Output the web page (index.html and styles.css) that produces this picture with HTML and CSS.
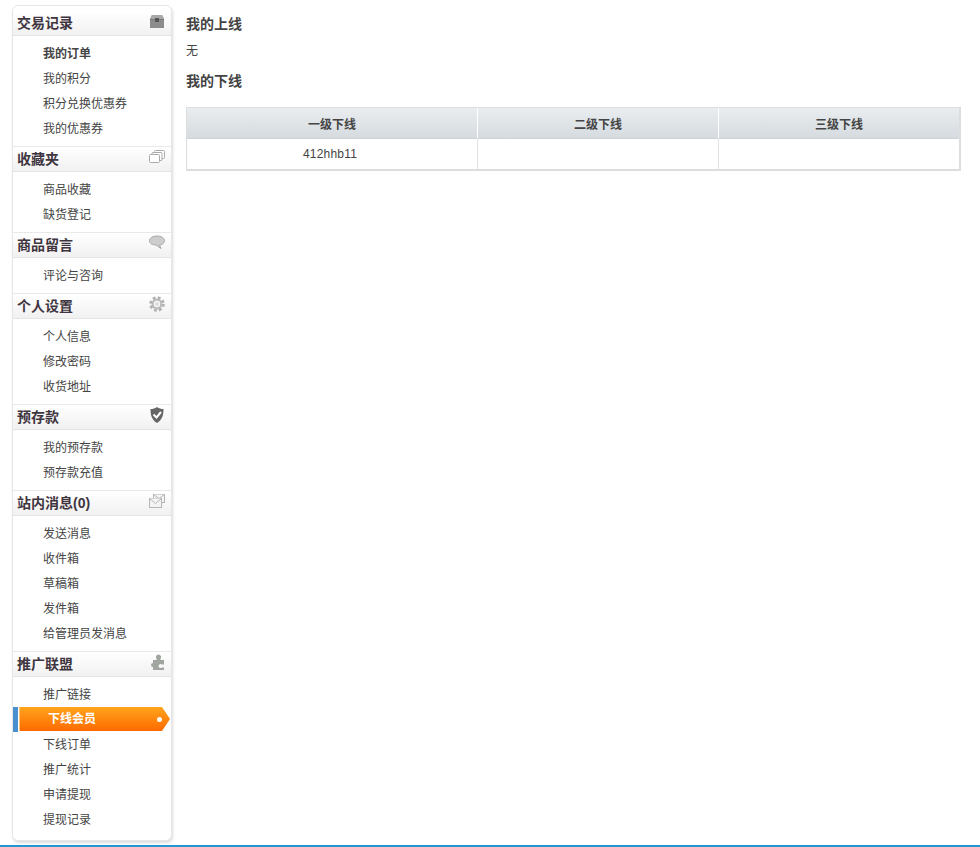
FILE: index.html
```html
<!DOCTYPE html>
<html lang="zh-CN">
<head>
    <meta charset="UTF-8">
    <title>我的下线</title>
    <link rel="stylesheet" href="styles.css">
</head>
<body>
    <div class="page">
        <div class="sidebar">
            <div class="menu-title">
                <span>交易记录</span>
                <svg class="menu-icon" viewBox="0 0 16 16"><path d="M1 6 3 2h10l2 4v9H1z" fill="#8c8c8c"/><path d="M3 2h10l2 4H1z" fill="#a8a8a8"/><path d="M1 6.500h14" stroke="#777"/><rect x="6" y="5" width="4" height="4" fill="#555"/></svg>
            </div>
            <ul class="menu-list">
                <li class="current"><a>我的订单</a></li>
                <li><a>我的积分</a></li>
                <li><a>积分兑换优惠券</a></li>
                <li><a>我的优惠券</a></li>
            </ul>
            <div class="menu-title">
                <span>收藏夹</span>
                <svg class="menu-icon" viewBox="0 0 16 16" fill="#fff" stroke="#aaa"><rect x="5.500" y="1.500" width="10" height="8" rx="1"/><rect x="3" y="3.500" width="10" height="8" rx="1"/><rect x="0.500" y="5.500" width="10" height="8" rx="1"/></svg>
            </div>
            <ul class="menu-list">
                <li><a>商品收藏</a></li>
                <li><a>缺货登记</a></li>
            </ul>
            <div class="menu-title">
                <span>商品留言</span>
                <svg class="menu-icon" viewBox="0 0 16 16"><path d="M8 1c4 0 7.500 1.800 7.500 4.700S12 10 10.500 10l1.500 3.500L7 10C3.500 10 .5 8.500.5 5.700S4 1 8 1z" fill="#cdcdcd" stroke="#a8a8a8"/></svg>
            </div>
            <ul class="menu-list">
                <li><a>评论与咨询</a></li>
            </ul>
            <div class="menu-title">
                <span>个人设置</span>
                <svg class="menu-icon" viewBox="0 0 16 16"><circle cx="8" cy="8" r="5.500" fill="none" stroke="#b0b0b0" stroke-width="4.500" stroke-dasharray="2.400 1.920"/><circle cx="8" cy="8" r="4.500" fill="none" stroke="#bbb" stroke-width="2"/><circle cx="8" cy="8" r="2" fill="#ddd"/></svg>
            </div>
            <ul class="menu-list">
                <li><a>个人信息</a></li>
                <li><a>修改密码</a></li>
                <li><a>收货地址</a></li>
            </ul>
            <div class="menu-title">
                <span>预存款</span>
                <svg class="menu-icon" viewBox="0 0 16 16"><path d="M8 0c2 1.500 4 2 6.500 2 0 6-1 10.500-6.500 14C2.500 12.500 1.500 8 1.500 2 4 2 6 1.500 8 0z" fill="#666"/><path d="m4.500 7.500 3 3 4.500-5.500" fill="none" stroke="#fff" stroke-width="2"/></svg>
            </div>
            <ul class="menu-list">
                <li><a>我的预存款</a></li>
                <li><a>预存款充值</a></li>
            </ul>
            <div class="menu-title">
                <span>站内消息(0)</span>
                <svg class="menu-icon" viewBox="0 0 16 16" fill="#f4f4f4" stroke="#b5b5b5"><rect x="4.500" y="1.500" width="11" height="8"/><path d="m4.500 1.500 5.500 4 5.500-4"/><rect x="0.500" y="5.500" width="12" height="9"/><path d="m.5 5.500 6 5 6-5"/></svg>
            </div>
            <ul class="menu-list">
                <li><a>发送消息</a></li>
                <li><a>收件箱</a></li>
                <li><a>草稿箱</a></li>
                <li><a>发件箱</a></li>
                <li><a>给管理员发消息</a></li>
            </ul>
            <div class="menu-title">
                <span>推广联盟</span>
                <svg class="menu-icon" viewBox="0 0 16 16"><path d="M4 6h3.500V4.500a2.500 2.500 0 1 1 4 0V6H15v4.500h-2a2 2 0 1 0 0 3h2V16H4v-3a2 2 0 1 1 0-4z" fill="#a0a5a0"/></svg>
            </div>
            <ul class="menu-list">
                <li><a>推广链接</a></li>
                <li class="active"><a>下线会员</a></li>
                <li><a>下线订单</a></li>
                <li><a>推广统计</a></li>
                <li><a>申请提现</a></li>
                <li><a>提现记录</a></li>
            </ul>
        </div>
        <div class="content">
            <h3>我的上线</h3>
            <p>无</p>
            <h3>我的下线</h3>
            <table class="team-table">
                <tr>
                    <th class="col-first">一级下线</th>
                    <th class="col-second">二级下线</th>
                    <th>三级下线</th>
                </tr>
                <tr>
                    <td class="member-name">412hhb11</td>
                    <td></td>
                    <td></td>
                </tr>
            </table>
        </div>
    </div>
    <div class="footer-line"></div>
</body>
</html>
```

FILE: styles.css
```css
html, body {
    height: 100%;
}
body {
    margin: 0;
    display: flex;
    flex-direction: column;
    font-family: "Liberation Sans", "Noto Sans CJK SC", sans-serif;
    font-size: 12px;
    color: #444;
    background: #fff;
}
.page {
    flex: 1;
    display: flex;
    align-items: flex-start;
    padding: 5px 19px 0 12px;
}
.footer-line {
    height: 2px;
    background: #1d9ad6;
}

/* left menu */
.sidebar {
    width: 158px;
    height: 830px;
    padding-top: 4px;
    flex-shrink: 0;
    background: #fff;
    border: 1px solid #e6e6e6;
    border-radius: 6px;
    box-shadow: 1px 2px 3px #ddd;
}
.menu-title {
    height: 22px;
    display: flex;
    align-items: center;
    justify-content: space-between;
    padding: 0 6px 2px 4px;
    border-top: 1px solid #e9e9e9;
    border-bottom: 1px solid #e4e4e4;
    background: linear-gradient(#fff, #f1f1f1);
    font-size: 14px;
    font-weight: bold;
    color: #3f3540;
}
.sidebar .menu-title:first-child {
    border-top-color: #fff;
}
.menu-icon {
    width: 16px;
    height: 16px;
    margin-top: -2px;
}
.menu-list {
    list-style: none;
    margin: 0;
    padding: 6px 0 4px;
}
.menu-list li {
    height: 25px;
    line-height: 25px;
    padding-left: 30px;
}
.menu-list .current {
    font-weight: bold;
}
.menu-list .active {
    position: relative;
    padding-left: 0;
    margin: -1px 1px 1px 0;
    color: #fff;
    font-weight: bold;
    border-left: 5px solid #4a8fd0;
}
.menu-list .active a {
    display: block;
    height: 24px;
    line-height: 24px;
    margin-left: 1px;
    padding-left: 28px;
    border-left: 1px solid #ffc27a;
    background: linear-gradient(#ffa41c, #ff6a00);
    clip-path: polygon(0 0, 143px 0, 151px 12px, 143px 24px, 0 24px);
}
.menu-list .active::after {
    content: "";
    position: absolute;
    right: 8px;
    top: 10px;
    width: 5px;
    height: 5px;
    border-radius: 50%;
    background: #fff;
}

/* right side */
.content {
    flex: 1;
    margin-left: 14px;
}
.content h3 {
    margin: 0;
    height: 20px;
    line-height: 20px;
    font-size: 14px;
    color: #444;
}
.content h3:first-child {
    margin-top: 9px;
}
.content p {
    margin: 8px 0 11px;
    line-height: 18px;
}
.team-table {
    width: 775px;
    margin-top: 16px;
    border-collapse: separate;
    border-spacing: 0;
    table-layout: fixed;
    border: 1px solid #ddd;
    border-width: 1px 2px 2px 1px;
}
.team-table th {
    height: 30px;
    padding: 0;
    font-size: 12px;
    color: #444;
    border-right: 1px solid #fff;
    border-bottom: 1px solid #cfd3d6;
    background: linear-gradient(#e9edf0, #d6dbdf);
}
.team-table td {
    height: 30px;
    padding: 0;
    text-align: center;
    border-right: 1px solid #e2e2e2;
}
.team-table th:last-child, .team-table td:last-child {
    border-right: 0;
}
.team-table .member-name {
    padding-right: 4px;
    letter-spacing: 0.2px;
}
.col-first {
    width: 290px;
}
.col-second {
    width: 240px;
}
```
